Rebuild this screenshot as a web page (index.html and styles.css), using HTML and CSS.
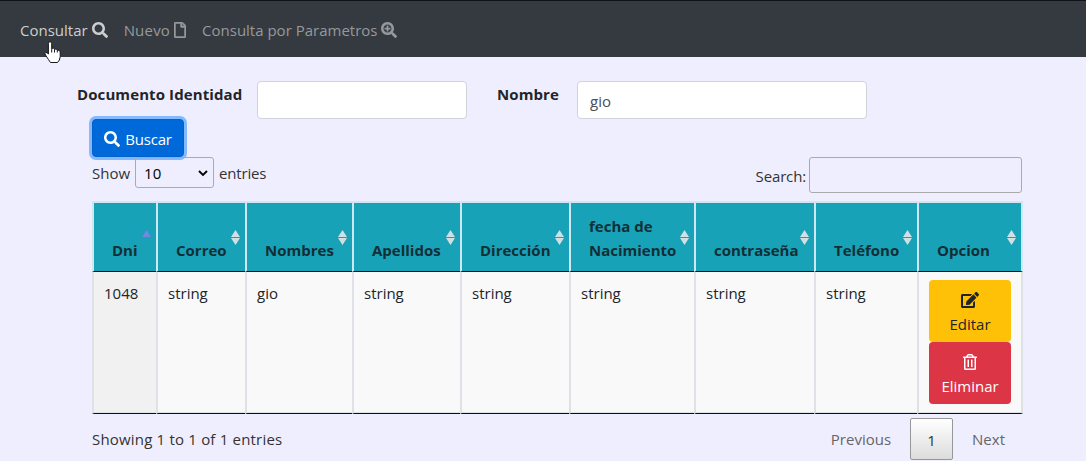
FILE: index.html
```
<!DOCTYPE html>
<html lang="es">
<head>
<meta charset="utf-8">
<title>Consultar</title>
<link rel="stylesheet" href="styles.css">
</head>
<body>
<svg class="defs" aria-hidden="true">
  <symbol id="search" viewBox="0 0 512 512"><path d="M505 442.7L405.3 343c-4.5-4.5-10.6-7-17-7H372c27.6-35.3 44-79.7 44-128C416 93.1 322.9 0 208 0S0 93.1 0 208s93.1 208 208 208c48.3 0 92.7-16.4 128-44v16.3c0 6.4 2.5 12.5 7 17l99.7 99.7c9.4 9.4 24.6 9.4 33.9 0l28.3-28.3c9.4-9.4 9.4-24.6.1-34zM208 336c-70.7 0-128-57.2-128-128 0-70.7 57.2-128 128-128 70.7 0 128 57.2 128 128 0 70.7-57.2 128-128 128z"/></symbol>
  <symbol id="file" viewBox="0 0 384 512"><path d="M369.9 97.9L286 14C277 5 264.8-.1 252.1-.1H48C21.5 0 0 21.5 0 48v416c0 26.5 21.5 48 48 48h288c26.5 0 48-21.5 48-48V131.9c0-12.7-5.1-25-14.1-34zM332.1 128H256V51.9l76.1 76.1zM48 464V48h160v104c0 13.3 10.7 24 24 24h104v288H48z"/></symbol>
  <symbol id="plus" viewBox="0 0 512 512"><use href="#search"/><path d="M304 192v32c0 6.600-5.400 12-12 12h-56v56c0 6.600-5.400 12-12 12h-32c-6.600 0-12-5.400-12-12v-56h-56c-6.600 0-12-5.400-12-12v-32c0-6.600 5.400-12 12-12h56v-56c0-6.600 5.400-12 12-12h32c6.600 0 12 5.400 12 12v56h56c6.600 0 12 5.400 12 12z"/></symbol>
  <symbol id="edit" viewBox="0 0 576 512"><path d="M402.6 83.2l90.2 90.2c3.8 3.8 3.8 10 0 13.8L274.4 405.6l-92.8 10.3c-12.4 1.4-22.9-9.1-21.5-21.5l10.3-92.8L388.8 83.2c3.8-3.8 10-3.8 13.8 0zm162-22.9l-48.8-48.8c-15.2-15.2-39.9-15.2-55.2 0l-35.4 35.4c-3.8 3.8-3.8 10 0 13.8l90.2 90.2c3.8 3.8 10 3.8 13.8 0l35.4-35.4c15.2-15.3 15.2-40 0-55.2zM384 346.2V448H64V128h229.8c3.2 0 6.2-1.3 8.5-3.5l40-40c7.6-7.6 2.2-20.5-8.5-20.5H48C21.5 64 0 85.5 0 112v352c0 26.5 21.5 48 48 48h352c26.5 0 48-21.5 48-48V306.2c0-10.7-12.9-16-20.5-8.5l-40 40c-2.2 2.3-3.5 5.3-3.5 8.5z"/></symbol>
  <symbol id="trash" viewBox="0 0 448 512"><path d="M268 416h24a12 12 0 0 0 12-12V188a12 12 0 0 0-12-12h-24a12 12 0 0 0-12 12v216a12 12 0 0 0 12 12zM432 80h-82.41l-34-56.7A48 48 0 0 0 274.41 0H173.59a48 48 0 0 0-41.16 23.3L98.41 80H16A16 16 0 0 0 0 96v16a16 16 0 0 0 16 16h16v336a48 48 0 0 0 48 48h288a48 48 0 0 0 48-48V128h16a16 16 0 0 0 16-16V96a16 16 0 0 0-16-16zM171.84 50.91A6 6 0 0 1 177 48h94a6 6 0 0 1 5.15 2.91L293.61 80H154.39zM368 464H80V128h288zm-212-48h24a12 12 0 0 0 12-12V188a12 12 0 0 0-12-12h-24a12 12 0 0 0-12 12v216a12 12 0 0 0 12 12z"/></symbol>
  <symbol id="sort" viewBox="0 0 9 15"><path d="M4.5 0L9 7H0zM0 8h9L4.500 15z"/></symbol>
</svg>
<nav class="navbar">
  <a class="nav-link active"><span>Consultar</span><svg class="icon"><use href="#search"/></svg></a>
  <a class="nav-link"><span class="nuevo">Nuevo</span><svg class="icon icon-file"><use href="#file"/></svg></a>
  <a class="nav-link"><span>Consulta por Parametros</span><svg class="icon"><use href="#plus"/></svg></a>
</nav>
<svg class="cursor" viewBox="0 0 17 23"><path d="M6 1.200Q7.700 1.200 7.700 3V8Q10 7 10.500 8.600Q13 8 13.300 9.600Q16 9.200 16.200 11.500V16Q16 20 13.500 22H6.500Q5 20 1.500 14.500Q.3 12.500 1.800 12Q3 11.800 4.400 13.500V3Q4.400 1.200 6 1.200Z" fill="#fff" stroke="#15151d"/><path d="M7.700 8v4M10.500 8.600V12M13.300 9.600V12" stroke="#15151d" fill="none"/></svg>
<main class="container">
  <form class="filters">
    <label class="doc">Documento Identidad</label><input class="field field-doc">
    <label class="name">Nombre</label><input class="field field-name" value="gio">
  </form>
  <button class="btn-search"><svg class="icon"><use href="#search"/></svg><span>Buscar</span></button>
  <div class="controls">
    <div class="length"><span>Show</span><span class="select">10<svg viewBox="0 0 10 7"><path d="M1 1l4 4 4-4"/></svg></span><span class="entries">entries</span></div>
    <label class="search"><span>Search:</span><input></label>
  </div>
  <table class="grid">
    <colgroup><col class="c1"><col class="c2"><col class="c3"><col class="c4"><col class="c5"><col class="c6"><col class="c7"><col class="c8"><col class="c9"></colgroup>
    <thead><tr>
      <th><div class="head sorted"><span>Dni</span><svg><path d="M4.500 0L9 7H0z"/></svg></div></th>
      <th><div class="head"><span>Correo</span><svg><use href="#sort"/></svg></div></th>
      <th><div class="head"><span>Nombres</span><svg><use href="#sort"/></svg></div></th>
      <th><div class="head"><span>Apellidos</span><svg><use href="#sort"/></svg></div></th>
      <th><div class="head"><span>Dirección</span><svg><use href="#sort"/></svg></div></th>
      <th><div class="head"><span>fecha de<br>Nacimiento</span><svg><use href="#sort"/></svg></div></th>
      <th><div class="head"><span>contraseña</span><svg><use href="#sort"/></svg></div></th>
      <th><div class="head"><span>Teléfono</span><svg><use href="#sort"/></svg></div></th>
      <th><div class="head"><span>Opcion</span><svg><use href="#sort"/></svg></div></th>
    </tr></thead>
    <tbody><tr>
      <td class="key">1048</td><td>string</td><td>gio</td><td>string</td><td>string</td><td>string</td><td>string</td><td>string</td>
      <td><div class="actions"><button class="edit"><svg><use href="#edit"/></svg><span>Editar</span></button><button class="delete"><svg><use href="#trash"/></svg><span>Eliminar</span></button></div></td>
    </tr></tbody>
  </table>
  <footer class="footer">
    <span class="info">Showing 1 to 1 of 1 entries</span>
    <div class="pager"><span>Previous</span><span class="current">1</span><span>Next</span></div>
  </footer>
</main>
</body>
</html>
```
FILE: styles.css
```
* { box-sizing: border-box; }
body { margin: 0; height: 461px; overflow: hidden; background: #efeeff; color: #212529; font: 15px/24px "Open Sans", "Noto Sans", sans-serif; }
input, button { font: inherit; color: inherit; margin: 0; }
svg { fill: currentColor; flex: none; }
.defs { position: absolute; width: 0; height: 0; }
.icon { width: 16px; height: 16px; }
.icon-file { width: 12px; stroke: currentColor; stroke-width: 14; }
.navbar { display: flex; align-items: center; gap: 16px; height: 57px; padding: 2px 20px 0; background: #343a40; border-top: 1px solid #111217; }
.nav-link { display: flex; align-items: center; gap: 4px; color: #96999c; white-space: nowrap; }
.nav-link.active { color: #cccecf; }
.nuevo { letter-spacing: .2px; }
.cursor { position: absolute; left: 44px; top: 40px; width: 17px; height: 24px; }
.container { width: 930px; margin: 24px 0 0 92px; }
.filters { display: flex; height: 38px; margin-left: -15px; }
.filters label { font-weight: 700; line-height: 27px; letter-spacing: .1px; white-space: nowrap; }
.doc { width: 180px; }
.name { width: 80px; margin-left: 30px; }
.field { height: 38px; padding: 2px 12px 0; border: 1px solid #ced4da; border-radius: 4px; background: #fff; color: #495057; outline: 0; }
.field-doc { width: 210px; }
.field-name { width: 290px; }
.btn-search { position: relative; display: flex; align-items: center; justify-content: center; gap: 5px; width: 92px; height: 38px; padding: 2px 0 0; color: #fff; background: #0069d9; border: 1px solid #0062cc; border-radius: 4px; box-shadow: 0 0 0 3px #82b9ff; letter-spacing: -.2px; }
.controls { display: flex; justify-content: space-between; height: 44px; color: #333; }
.length { display: flex; height: 31px; line-height: 33px; gap: 5px; position: relative; }
.entries { letter-spacing: -.2px; }
.select { display: flex; align-items: center; justify-content: space-between; width: 79px; padding: 2px 5px 0 8px; border: 1px solid #aaa; border-radius: 3px; color: #000; }
.select svg { width: 10px; height: 7px; fill: none; stroke: #000; stroke-width: 1.8; }
.search { display: flex; gap: 3px; line-height: 39px; letter-spacing: -.15px; }
.search input { width: 213px; height: 36px; border: 1px solid #aaa; border-radius: 3px; background: transparent; }
.grid { width: 931px; table-layout: fixed; border-collapse: separate; border-spacing: 0; }
.c1 { width: 64px; }
.c2 { width: 89px; }
.c3 { width: 107px; }
.c4 { width: 108px; }
.c5 { width: 109px; }
.c6 { width: 125px; }
.c7 { width: 120px; }
.c8 { width: 103px; }
.c9 { width: 106px; }
th { height: 71px; padding: 0; border: solid #cfe7f2; border-width: 2px 0 1px 2px; border-bottom-color: #111; background: #17a2b8; }
th:last-child { border-right-width: 2px; }
.head { position: relative; height: 68px; padding: 0 0 9px 18px; display: flex; align-items: flex-end; text-align: left; white-space: nowrap; color: #132f36; }
.head svg { position: absolute; right: 5px; top: 27px; width: 9px; height: 15px; color: #cfe0e4; }
.head.sorted svg { color: #7388df; }
td { height: 142px; padding: 7px 10px 0; vertical-align: top; background: #f9f9f9; border: solid #dee2e6; border-width: 0 0 1px 2px; border-bottom-color: #111; box-shadow: inset 0 -1px #dee2e6; line-height: 28px; }
td:last-child { border-right-width: 2px; }
td.key { background: #f1f1f1; }
.actions { display: flex; flex-direction: column; width: 82px; padding-top: 1px; }
.actions button { display: flex; flex-direction: column; align-items: center; height: 62px; padding: 12px 0 0; border: 0; border-radius: 4px; line-height: 24px; gap: 4px; }
.actions svg { height: 16px; width: 18px; }
.edit { background: #ffc107; color: #212529; }
.delete { background: #dc3545; color: #fff; }
.footer { display: flex; justify-content: space-between; padding: 4px 0 0; color: #333; line-height: 43px; }
.info { letter-spacing: .19px; }
.pager { display: flex; color: #666; padding-right: 17px; gap: 19px; }
.current { width: 43px; height: 42px; border: 1px solid #979797; border-radius: 2px; background: linear-gradient(#fff, #dcdcdc); color: #333; text-align: center; }
```
